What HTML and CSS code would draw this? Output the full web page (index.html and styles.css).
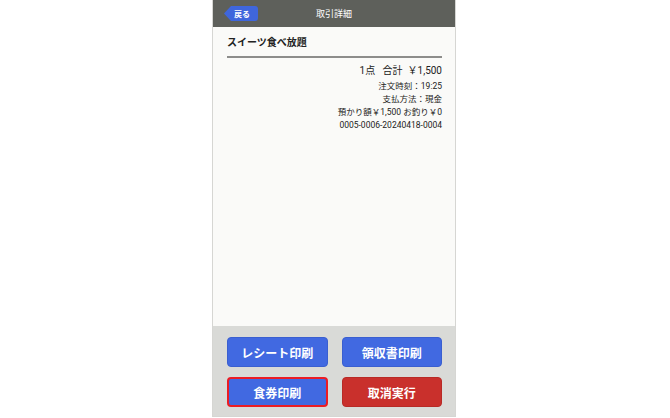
FILE: index.html
```html
<!DOCTYPE html>
<html lang="ja">

<head>
    <meta charset="UTF-8">
    <meta name="viewport" content="width=device-width, initial-scale=1.0">
    <title>取引詳細</title>
    <link rel="stylesheet" href="styles.css">
</head>

<body>
    <div class="phone">
        <div class="header">
            <a href="#" class="back_btn">戻る</a>
            <h1 class="page_title">取引詳細</h1>
        </div>

        <div class="content">
            <h2 class="item_name">スイーツ食べ放題</h2>
            <div class="detail">
                <p class="total">1点&nbsp;&nbsp;&nbsp;合計&nbsp;&nbsp;￥1,500</p>
                <p>注文時刻：19:25</p>
                <p>支払方法：現金</p>
                <p>預かり額￥1,500 お釣り￥0</p>
                <p>0005-0006-20240418-0004</p>
            </div>
        </div>

        <div class="footer">
            <button class="btn">レシート印刷</button>
            <button class="btn">領収書印刷</button>
            <button class="btn focus">食券印刷</button>
            <button class="btn danger">取消実行</button>
        </div>
    </div>
</body>

</html>
```

FILE: styles.css
```css
* {
    padding: 0;
    margin: 0;
    box-sizing: border-box;
}

body {
    background-color: #fff;
    font-family: Roboto, "Noto Sans CJK JP", sans-serif;
    color: #222;
}

.phone {
    width: 244px;
    height: 417px;
    margin: 0 0 0 212px;
    display: flex;
    flex-direction: column;
    border-left: 1px solid #d6d6d3;
    border-right: 1px solid #d6d6d3;
    border-bottom: 1px solid #d6d6d3;
}

.header {
    height: 27px;
    background-color: #5e605b;
    display: flex;
    align-items: center;
    justify-content: center;
    position: relative;
}

/* 左が尖ったタグ形の戻るボタン */
.back_btn {
    position: absolute;
    left: 11px;
    top: 6px;
    height: 15px;
    width: 34px;
    padding-left: 10px;
    background-color: #3f66dc;
    color: #fff;
    font-family: "Noto Sans CJK JP", sans-serif;
    font-size: 8px;
    font-weight: 700;
    line-height: 15px;
    text-decoration: none;
    border-radius: 0 3px 3px 0;
    clip-path: polygon(7px 0, 100% 0, 100% 100%, 7px 100%, 0 50%);
}

.page_title {
    font-family: "Noto Sans CJK JP", sans-serif;
    font-size: 9px;
    font-weight: 400;
    color: #fff;
}

.content {
    flex: 1;
    background-color: #fafaf8;
    padding: 8px 13px 0 14px;
}

.item_name {
    font-family: "Noto Sans CJK JP", sans-serif;
    font-size: 10px;
    font-weight: 700;
    line-height: 14px;
    padding: 0 0 7px;
    border-bottom: 2px solid #8d8d8b;
}

.detail {
    text-align: right;
    padding-top: 5px;
}

.detail p {
    font-size: 8.5px;
    line-height: 13px;
}

.detail .total {
    font-size: 10px;
    line-height: 16px;
    margin-bottom: 1px;
}

.footer {
    background-color: #d9dad7;
    display: grid;
    grid-template-columns: 1fr 1fr;
    column-gap: 14px;
    row-gap: 10px;
    padding: 11px 13px 9px 14px;
}

.btn {
    height: 30px;
    border: 1px solid #3a5fd0;
    border-radius: 4px;
    background-color: #4169e1;
    color: #fff;
    font-family: "Noto Sans CJK JP", sans-serif;
    font-size: 12px;
    font-weight: 700;
}

.btn.focus {
    border: 2px solid #ec1c24;
}

.btn.danger {
    background-color: #c9302c;
    border-color: #b82a26;
}
```
